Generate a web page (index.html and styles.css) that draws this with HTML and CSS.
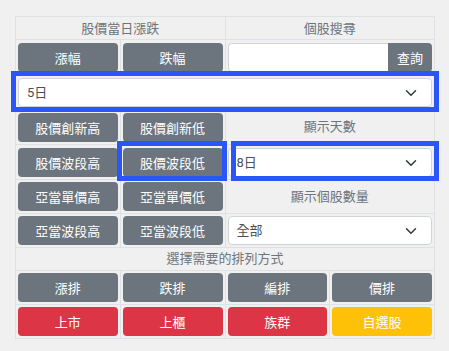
FILE: index.html
```html
<!DOCTYPE html>
<html lang="zh-Hant">
<head>
  <meta charset="UTF-8">
  <meta name="viewport" content="width=device-width, initial-scale=1.0">
  <title>股價排行</title>
  <link rel="stylesheet" href="styles.css">
</head>
<body>
  <div class="panel">
    <table class="board">
      <tr>
        <th colspan="2">股價當日漲跌</th>
        <th colspan="2">個股搜尋</th>
      </tr>
      <tr>
        <td><button class="btn gray">漲幅</button></td>
        <td><button class="btn gray">跌幅</button></td>
        <td colspan="2">
          <div class="search">
            <input type="text">
            <button class="btn gray">查詢</button>
          </div>
        </td>
      </tr>
      <tr>
        <td colspan="4">
          <select class="pick">
            <option>5日</option>
          </select>
        </td>
      </tr>
      <tr>
        <td><button class="btn gray">股價創新高</button></td>
        <td><button class="btn gray">股價創新低</button></td>
        <td colspan="2" class="label">顯示天數</td>
      </tr>
      <tr>
        <td><button class="btn gray">股價波段高</button></td>
        <td><button class="btn gray">股價波段低</button></td>
        <td colspan="2">
          <select class="pick">
            <option>8日</option>
          </select>
        </td>
      </tr>
      <tr class="tight">
        <td><button class="btn gray">亞當單價高</button></td>
        <td><button class="btn gray">亞當單價低</button></td>
        <td colspan="2" class="label">顯示個股數量</td>
      </tr>
      <tr class="tight">
        <td><button class="btn gray">亞當波段高</button></td>
        <td><button class="btn gray">亞當波段低</button></td>
        <td colspan="2">
          <select class="pick">
            <option>全部</option>
          </select>
        </td>
      </tr>
      <tr>
        <td colspan="4" class="label">選擇需要的排列方式</td>
      </tr>
      <tr class="tight">
        <td><button class="btn gray">漲排</button></td>
        <td><button class="btn gray">跌排</button></td>
        <td><button class="btn gray">編排</button></td>
        <td><button class="btn gray">價排</button></td>
      </tr>
      <tr class="tight">
        <td><button class="btn red">上市</button></td>
        <td><button class="btn red">上櫃</button></td>
        <td><button class="btn red">族群</button></td>
        <td><button class="btn yellow">自選股</button></td>
      </tr>
    </table>

    <!-- highlight boxes drawn over the table -->
    <div class="mark mark-range"></div>
    <div class="mark mark-wave"></div>
    <div class="mark mark-days"></div>
  </div>
</body>
</html>
```

FILE: styles.css
```css
/* General Reset */
body {
  margin: 0;
  background-color: #f0f0f0;
  font-family: Roboto, "Noto Sans CJK TC", sans-serif;
  font-size: 13px;
}

.panel {
  position: relative;
  width: 420px;
  margin: 16px 0 0 15px;
}

/* Table */
.board {
  width: 420px;
  border-collapse: collapse;
  table-layout: fixed;
}

.board th,
.board td {
  border: 1px solid #dee2e6;
  padding: 3px 2px 2px;
  text-align: center;
  vertical-align: middle;
}

.board tr.tight td {
  padding-top: 2px;
}

.board th {
  padding: 2px 2px 1px;
  font-weight: normal;
  line-height: 19px;
  color: #6c757d;
}

.board td.label {
  padding: 2px;
  line-height: 18px;
  color: #6c757d;
}

/* Buttons */
.btn {
  display: block;
  width: 100%;
  height: 29px;
  padding: 0;
  border: none;
  border-radius: 4px;
  font-family: inherit;
  font-size: 13px;
  color: #ffffff;
  cursor: pointer;
}

.gray {
  background-color: #6c757d;
}

.red {
  background-color: #dc3545;
}

.yellow {
  background-color: #ffc107;
}

/* Search */
.search {
  display: flex;
}

.search input {
  flex: 1;
  min-width: 0;
  height: 29px;
  box-sizing: border-box;
  margin: 0;
  border: 1px solid #ced4da;
  border-right: none;
  border-radius: 4px 0 0 4px;
  background-color: #ffffff;
}

.search .btn {
  width: 44px;
  flex: none;
  border-radius: 0 4px 4px 0;
}

/* Selects */
.pick {
  display: block;
  width: 100%;
  height: 29px;
  box-sizing: border-box;
  padding: 0 8px;
  border: 1px solid #ced4da;
  border-radius: 4px;
  font-family: inherit;
  font-size: 13px;
  color: #495057;
  appearance: none;
  background-color: #ffffff;
  background-image: url("data:image/svg+xml,%3csvg xmlns='http://www.w3.org/2000/svg' viewBox='0 0 16 16'%3e%3cpath fill='none' stroke='%23343a40' stroke-linecap='round' stroke-linejoin='round' stroke-width='2' d='m2 5 6 6 6-6'/%3e%3c/svg%3e");
  background-repeat: no-repeat;
  background-position: right 12px center;
  background-size: 16px 12px;
}

/* Highlight boxes */
.mark {
  position: absolute;
  box-sizing: border-box;
  border: 5px solid #2c55f7;
  pointer-events: none;
}

.mark-range {
  left: -4px;
  top: 55px;
  width: 428px;
  height: 41px;
}

.mark-wave {
  left: 102px;
  top: 125px;
  width: 110px;
  height: 40px;
}

.mark-days {
  left: 216px;
  top: 125px;
  width: 208px;
  height: 40px;
}
```
